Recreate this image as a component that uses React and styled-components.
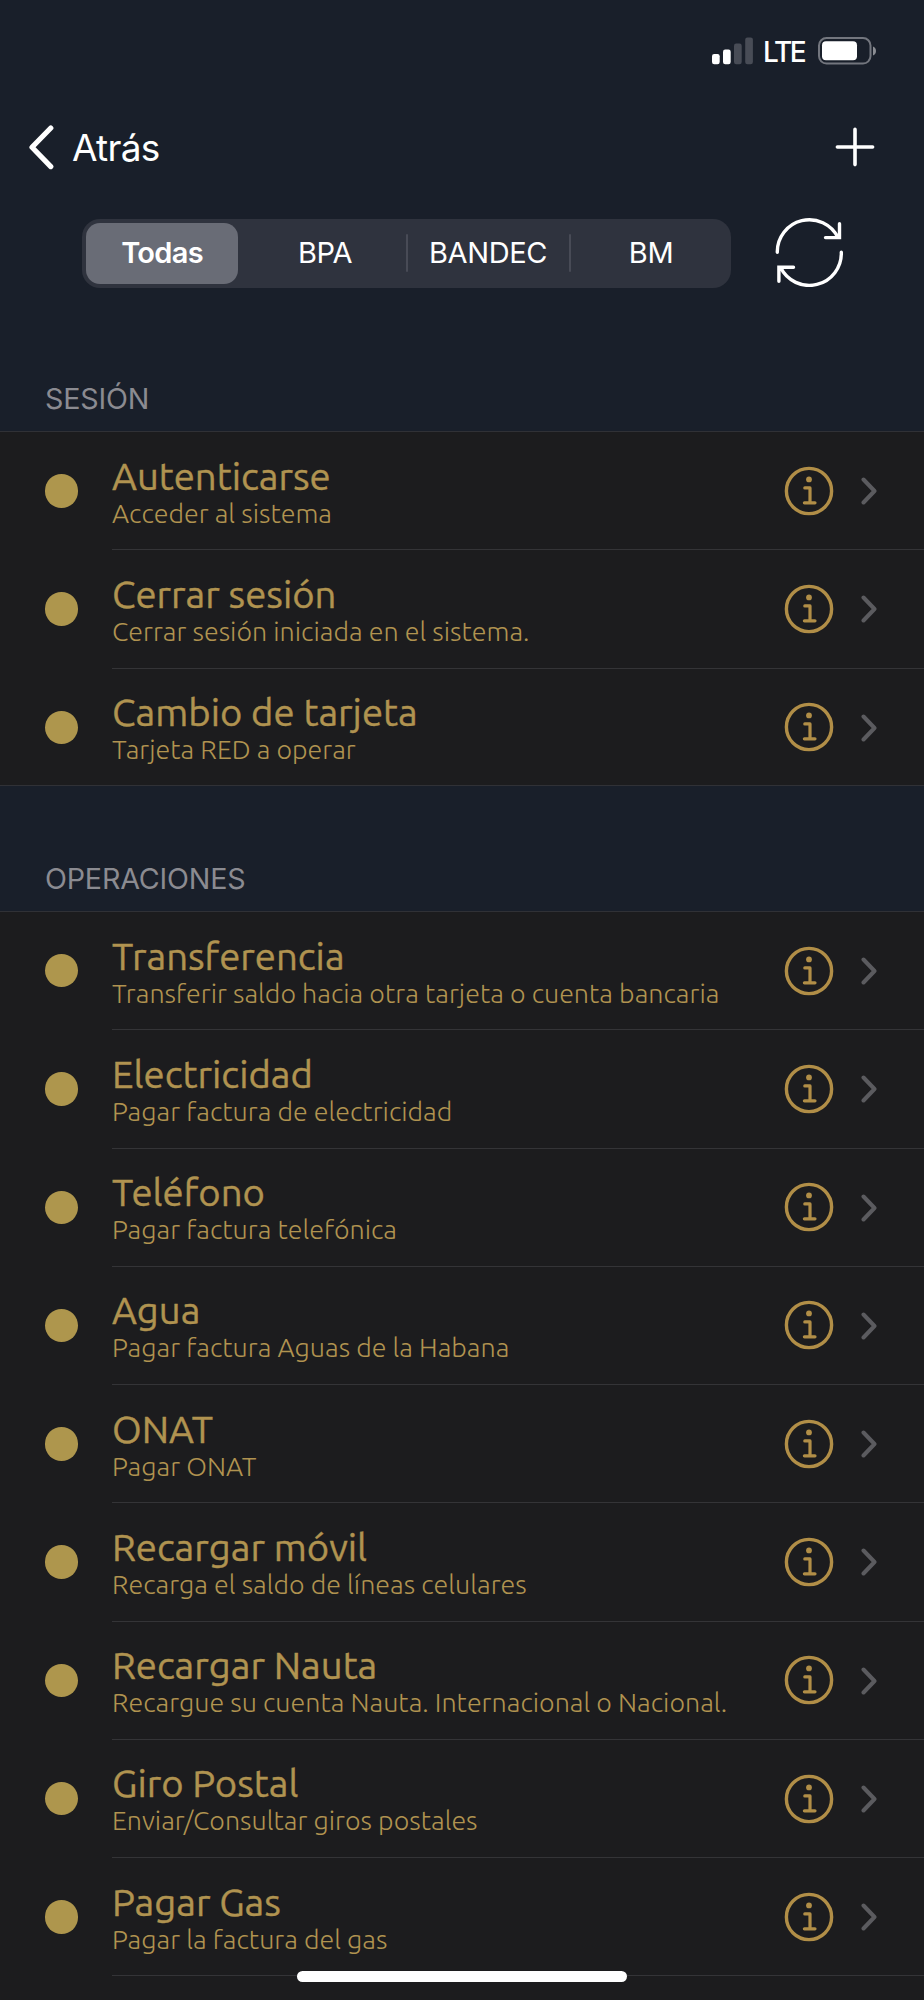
import React, { useState } from 'react';
import styled, { createGlobalStyle } from 'styled-components';

const GlobalStyle = createGlobalStyle`
    * { box-sizing:border-box; }
    body { margin:0; background-color:#191f2a; }
    button { border:0; padding:0; background:none; color:inherit; font:inherit; }
`

const Screen = styled.div`
    position:relative; width:924px; height:2000px; overflow:hidden;
    display:flex; flex-direction:column;
    background-color:#191f2a; color:white;
    font-family: Inter, 'Liberation Sans', sans-serif;
`

const StatusBar = styled.div`
    display:flex; justify-content:flex-end; align-items:center;
    height:102px; padding:0 47px 0 0; flex:none;
`

const Network = styled.span`
    margin:2px 14px 0 9px; width:41px; white-space:nowrap;
    font-size:28px; line-height:30px; font-weight:500; letter-spacing:-2.3px;
`

const NavBar = styled.div`
    display:flex; justify-content:space-between; align-items:center;
    height:90px; padding:0 48px 0 27px; flex:none;
`

const BackButton = styled.button`
    display:flex; align-items:center; gap:17px;
    font-size:37px; line-height:44px; letter-spacing:-0.7px;
`

const BackLabel = styled.span`
    padding-top:2px;
`

const FilterBar = styled.div`
    display:flex; align-items:center; flex:none;
    height:120px; padding:0 79px 0 82px; gap:43px;
`

const Segmented = styled.div`
    width:649px; height:69px; margin-top:2px; border-radius:18px;
    background-color:#2f333e; 
`

const SegmentGrid = styled.div`
    display:grid; grid-template-columns:repeat(4, 163px);
    height:100%; margin:0 -1.5px;
`

const Segment = styled.button`
    display:flex; align-items:center; justify-content:center;
    height:61px; margin:4px 5.5px; border-radius:14px;
    background-color:${props => props.$active ? '#696c76' : 'transparent'};
    font-size:29px; line-height:34px; font-weight:${props => props.$active ? 600 : 400};
    letter-spacing:${props => props.$active ? '-0.7px' : '-0.4px'};
`

const SegmentCell = styled.div`
    position:relative;
    display:grid;

    &::before {
        content:''; position:absolute; left:-1px; top:15px;
        width:2px; height:38px; border-radius:1px;
        background-color:${props => props.$divider ? '#484b56' : 'transparent'};
    }
`

const SectionHeader = styled.div`
    display:flex; align-items:flex-end; flex:none;
    height:${props => props.$height}px; padding:0 45px 15px;
    color:#8b8b91; font-size:28.7px; line-height:34px; letter-spacing:-0.2px;
`

const List = styled.div`
    border-top:1px solid #303136; background-color:#1c1c1e;
    flex:${props => props.$fill ? '1' : 'none'};
    border-bottom:${props => props.$fill ? '0' : '1px solid #303136'};
`

const Row = styled.div`
    display:flex; height:${props => props.$last ? 116.28 : 118.28}px; padding-left:44.7px;
`

const Dot = styled.span`
    width:33.5px; height:33.5px; margin:42px 33.8px 0 0; border-radius:50%;
    background-color:#ae964d; flex:none;
`

const RowBody = styled.div`
    display:flex; flex:1; padding-right:46px;
    border-bottom:${props => props.$last ? '0' : '1px solid #343437'};
`

const Texts = styled.div`
    flex:1; padding-top:24.6px; white-space:nowrap; color:#b09350;
    font-family: Ubuntu, 'Noto Sans', sans-serif;
`

const Title = styled.div`
    font-size:38.3px; line-height:38px; -webkit-text-stroke:0.4px #b09350;
`

const Detail = styled.div`
    font-size:26.85px; line-height:36px; font-weight:300;
`

const InfoButton = styled.button`
    display:block; width:50px; height:50px; margin:33.7px 26px 0 0;
`

const ChevronBox = styled.span`
    width:18px; height:28px; margin-top:45px;
`

const HomeIndicator = styled.div`
    position:absolute; left:297px; top:1971px;
    width:330px; height:11px; border-radius:6px; background-color:white;
`

const banks = ['Todas', 'BPA', 'BANDEC', 'BM'];

const sections = [
    {
        name: 'SESIÓN', height: 119, rows: [
            ['Autenticarse', 'Acceder al sistema'],
            ['Cerrar sesión', 'Cerrar sesión iniciada en el sistema.'],
            ['Cambio de tarjeta', 'Tarjeta RED a operar']
        ]
    },
    {
        name: 'OPERACIONES', height: 125.2, rows: [
            ['Transferencia', 'Transferir saldo hacia otra tarjeta o cuenta bancaria'],
            ['Electricidad', 'Pagar factura de electricidad'],
            ['Teléfono', 'Pagar factura telefónica'],
            ['Agua', 'Pagar factura Aguas de la Habana'],
            ['ONAT', 'Pagar ONAT'],
            ['Recargar móvil', 'Recarga el saldo de líneas celulares'],
            ['Recargar Nauta', 'Recargue su cuenta Nauta. Internacional o Nacional.'],
            ['Giro Postal', 'Enviar/Consultar giros postales'],
            ['Pagar Gas', 'Pagar la factura del gas']
        ]
    }
];

const Signal = () => (
    <svg width="42" height="28" viewBox="0 0 42 28" fill="white">
        <rect x="0" y="17" width="7.7" height="10.3" rx="2.2" />
        <rect x="11" y="12.6" width="7.7" height="14.7" rx="2.2" />
        <rect x="22" y="6.6" width="7.7" height="20.7" rx="2.2" fill="#484c56" />
        <rect x="33.2" y="0.6" width="7.7" height="26.7" rx="2.2" fill="#484c56" />
    </svg>
)

const Battery = () => (
    <svg width="59" height="28" viewBox="0 0 59 28">
        <rect x="1" y="1" width="51.5" height="25.6" rx="7.5" fill="none" stroke="#73767e" strokeWidth="2" />
        <rect x="4" y="4.2" width="35" height="19" rx="4" fill="white" />
        <path d="M55 9.5c4 1.5 4 7.5 0 9z" fill="#8b8d93" />
    </svg>
)

const Info = () => (
    <svg width="50" height="50" viewBox="0 0 50 50" fill="none" stroke="#b18e47" strokeLinecap="round" strokeLinejoin="round">
        <circle cx="25" cy="25" r="22.6" strokeWidth="3.4" />
        <circle cx="25" cy="13.4" r="2.9" fill="#b18e47" stroke="none" />
        <path d="M20.8 21.9H26V36.8M20.4 36.8H31" strokeWidth="3.2" />
    </svg>
)

function App() {
    const [bank, setBank] = useState('Todas');

    return (
        <Screen>
            <GlobalStyle />
            <StatusBar>
                <Signal />
                <Network>LTE</Network>
                <Battery />
            </StatusBar>
            <NavBar>
                <BackButton>
                    <svg width="28" height="46" viewBox="0 0 28 46" fill="none" stroke="white" strokeWidth="5.2" strokeLinecap="round" strokeLinejoin="round">
                        <path d="M23.8 4L5 23.3L23.8 42.6" />
                    </svg>
                    <BackLabel>Atrás</BackLabel>
                </BackButton>
                <svg width="42" height="42" viewBox="0 0 42 42" stroke="white" strokeWidth="3.6" strokeLinecap="round">
                    <path d="M21 3.4V38.6M3.4 21H38.6" />
                </svg>
            </NavBar>
            <FilterBar>
                <Segmented>
                    <SegmentGrid>
                        {banks.map((name, i) => (
                            <SegmentCell key={name} $divider={i > 0 && bank !== name && bank !== banks[i - 1]}>
                                <Segment $active={bank === name} onClick={() => setBank(name)}>{name}</Segment>
                            </SegmentCell>
                        ))}
                    </SegmentGrid>
                </Segmented>
                <svg width="70" height="70" viewBox="0 0 70 70" fill="none" stroke="white" strokeWidth="3.4" strokeLinecap="round">
                    <path d="M3.3 35.3A32 32 0 0 1 64 20.6M65.5 6.7V20.6H51.5" />
                    <path d="M67.3 35.3A32 32 0 0 1 6.5 50.3M4.9 64.3V50.3H19.5" />
                </svg>
            </FilterBar>
            {sections.map((section, s) => (
                <React.Fragment key={section.name}>
                    <SectionHeader $height={section.height}>{section.name}</SectionHeader>
                    <List $fill={s === sections.length - 1}>
                        {section.rows.map(([title, detail], i) => {
                            const last = s === 0 && i === section.rows.length - 1;
                            return (
                                <Row key={title} $last={last}>
                                    <Dot />
                                    <RowBody $last={last}>
                                        <Texts>
                                            <Title>{title}</Title>
                                            <Detail>{detail}</Detail>
                                        </Texts>
                                        <InfoButton><Info /></InfoButton>
                                        <ChevronBox>
                                            <svg width="18" height="28" viewBox="0 0 18 28" fill="none" stroke="#5b5b5f" strokeWidth="4" strokeLinecap="round" strokeLinejoin="round">
                                                <path d="M3.5 2.5L14.5 14L3.5 25.5" />
                                            </svg>
                                        </ChevronBox>
                                    </RowBody>
                                </Row>
                            );
                        })}
                    </List>
                </React.Fragment>
            ))}
            <HomeIndicator />
        </Screen>
    );
}

export default App;
